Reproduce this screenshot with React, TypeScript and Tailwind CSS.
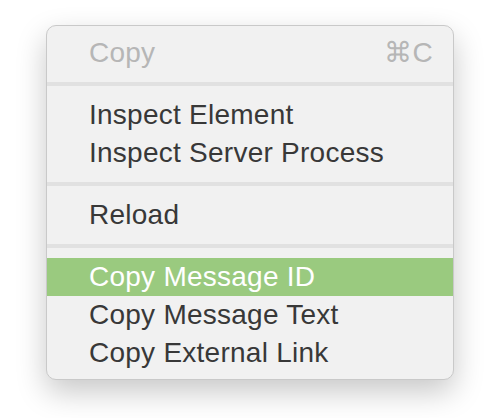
type Item = { label: string; shortcut?: string; disabled?: boolean; active?: boolean };

const groups: Item[][] = [
  [{ label: "Copy", shortcut: "⌘C", disabled: true }],
  [{ label: "Inspect Element" }, { label: "Inspect Server Process" }],
  [{ label: "Reload" }],
  [
    { label: "Copy Message ID", active: true },
    { label: "Copy Message Text" },
    { label: "Copy External Link" },
  ],
];

function MenuRow({ item }: { item: Item }) {
  const color = item.active
    ? "bg-[#9aca7f] text-white"
    : item.disabled
      ? "text-[#b6b6b6]"
      : "text-[#383838]";
  return (
    <div className={`flex h-[38px] items-center justify-between pl-[42px] pr-[20px] leading-[38px] ${color}`}>
      <span>{item.label}</span>
      {item.shortcut && <span>{item.shortcut}</span>}
    </div>
  );
}

export default function App() {
  return (
    <div className="h-[418px] w-[490px] bg-white pl-[46px] pt-[25px]">
      <div
        className="w-[408px] overflow-hidden rounded-[10px] border border-[#c9c9c9] bg-[#f1f1f1] pb-[7px] pt-[8px] text-[28px] tracking-[0.25px] shadow-[0_12px_30px_rgba(0,0,0,0.22)]"
        style={{ fontFamily: '"Liberation Sans", Arial, sans-serif' }}
      >
        {groups.map((group, gi) => (
          <div key={gi}>
            {gi > 0 && (
              <div className="py-[10px]">
                <div className="h-[4px] bg-[#e1e1e1]" />
              </div>
            )}
            {group.map(item => (
              <MenuRow key={item.label} item={item} />
            ))}
          </div>
        ))}
      </div>
    </div>
  );
}
